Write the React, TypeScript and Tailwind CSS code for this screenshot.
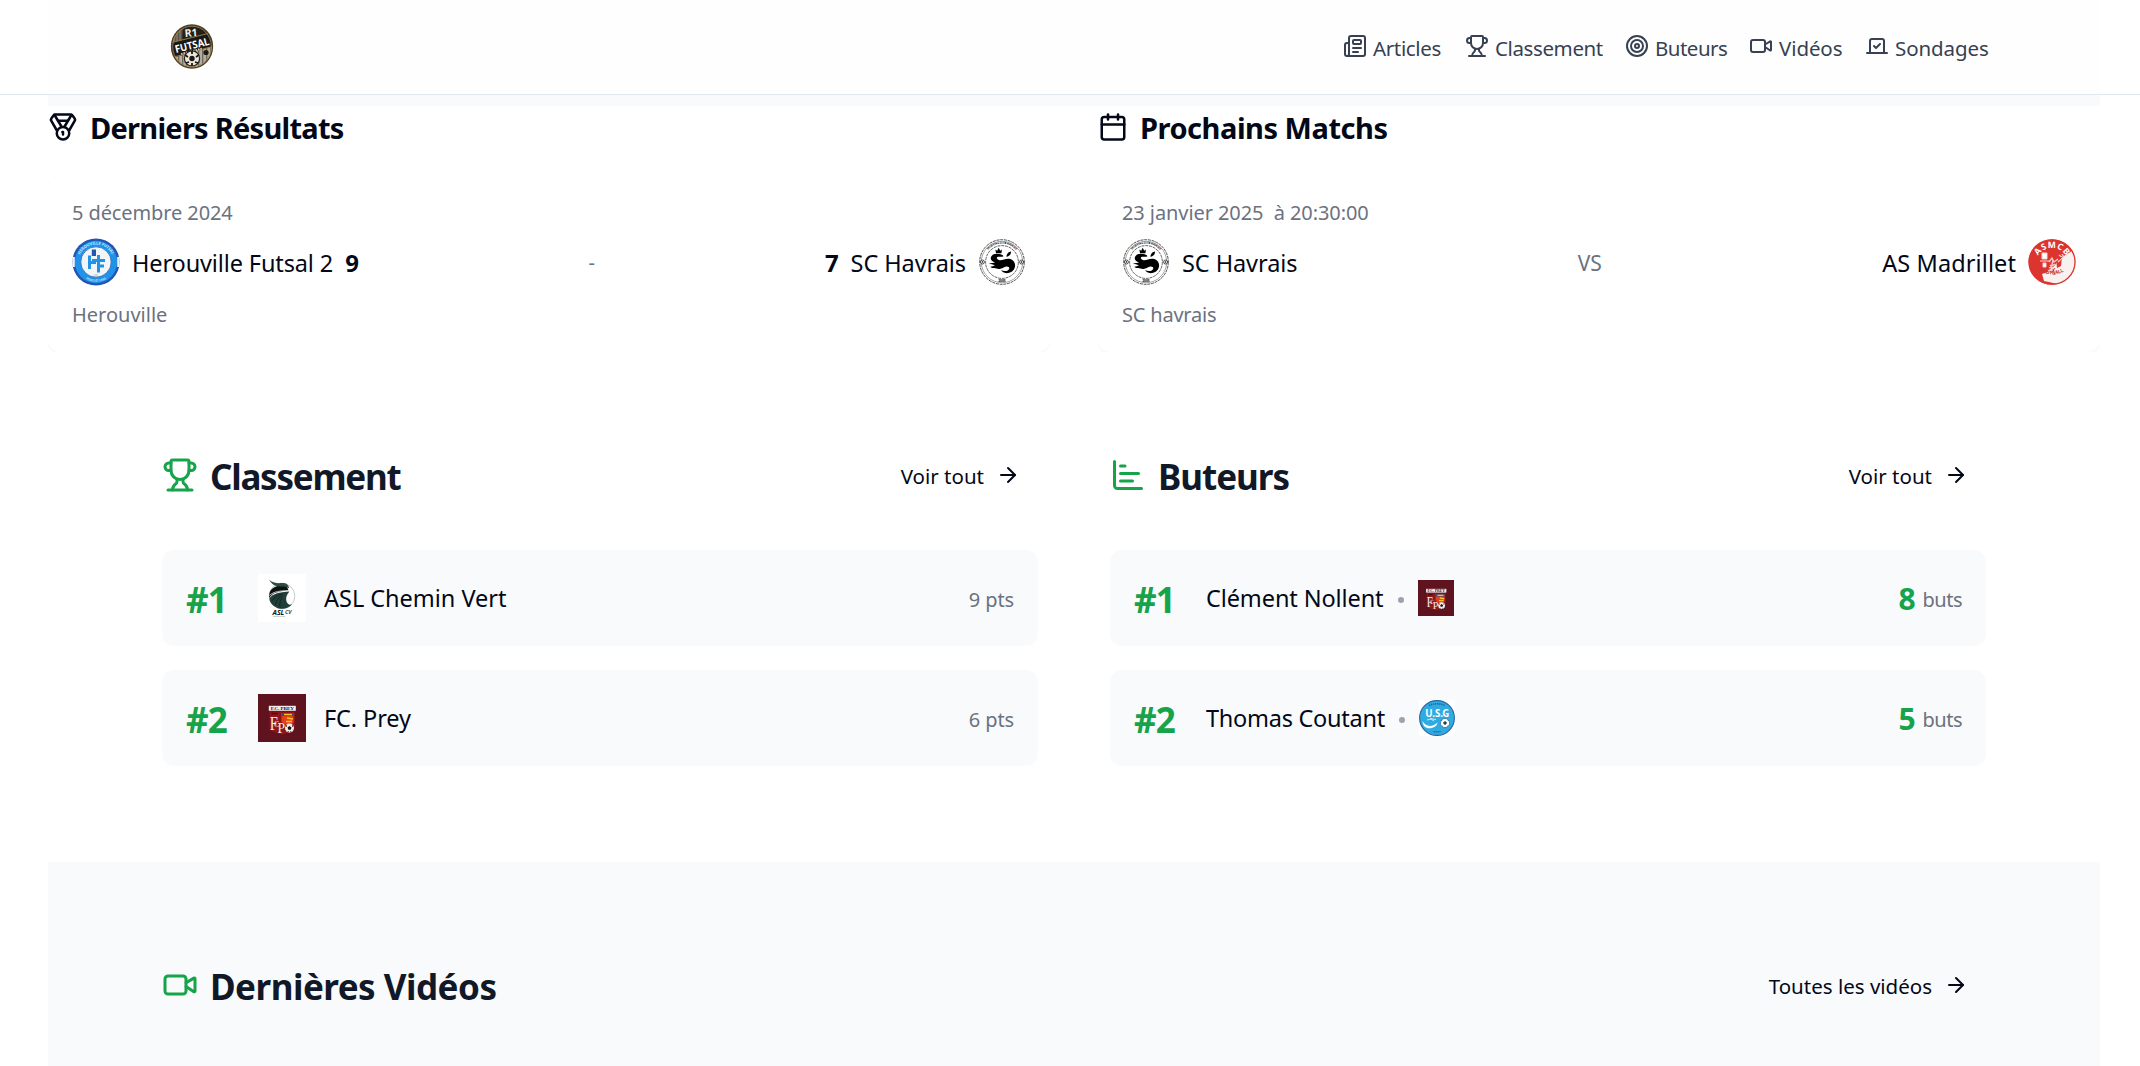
import type { ReactNode } from "react";
import {
  ArrowRight,
  Calendar,
  ChartBar,
  Medal,
  Newspaper,
  Target,
  Trophy,
  Video,
  Vote,
} from "lucide-react";

function LeagueLogo() {
  return (
    <svg viewBox="0 0 44 46" className="h-[46px] w-11">
      <defs>
        <clipPath id="league">
          <ellipse cx="22" cy="22.5" rx="20.5" ry="21.5" />
        </clipPath>
      </defs>
      <g clipPath="url(#league)">
        <rect width="44" height="46" fill="#b3aca0" />
        {[4, 8, 12, 16, 20, 24, 28, 32, 36, 40].map((x) => (
          <rect key={x} x={x} width="1.3" height="46" fill="#6f675a" />
        ))}
        <path d="M0 0H14L12 19 0 22Z" fill="#5b5449" />
        <path d="M4 0V20M7 0V20M10 0V20" stroke="#a1967f" strokeWidth=".8" />
        <path d="M13 0H44V10L12 18Z" fill="#23201c" />
        <path d="M0 19 44 8V22L6 33H0Z" fill="#1b1917" />
        <path d="M0 19 44 8M4 33 44 22" stroke="#9a7b43" strokeWidth="1" />
      </g>
      <text x="21" y="12.500" textAnchor="middle" fontFamily="Noto Sans" fontSize="10.500" fontWeight="700" fill="#f3efe6" transform="rotate(-5 21 9)">R1</text>
      <text x="22" y="25" textAnchor="middle" fontFamily="Noto Sans" fontSize="10.500" fontWeight="700" fill="#fff" textLength="35" lengthAdjust="spacingAndGlyphs" transform="rotate(-14 22 21)">FUTSAL</text>
      <path d="M11 30 32 24.5" stroke="#cfc8bb" strokeWidth="1.8" strokeDasharray="1.6 .9" />
      <circle cx="22" cy="34.5" r="7.6" fill="#ece7dc" stroke="#25221e" strokeWidth="1.2" />
      <circle cx="22" cy="34.5" r="2.7" fill="#1b1917" />
      <path d="M15 31l3 2M29 31l-3 2M16 39l3-1M28 39l-3-1M22 27v3M22 42v-3" stroke="#1b1917" strokeWidth="1.8" />
      <circle cx="36" cy="28.5" r="2.6" fill="#1b1917" />
      <ellipse cx="22" cy="22.5" rx="20.5" ry="21.5" fill="none" stroke="#4d4026" strokeWidth="1.3" />
      <ellipse cx="22" cy="22.5" rx="19.3" ry="20.3" fill="none" stroke="#a88b55" strokeWidth=".8" />
    </svg>
  );
}

function HerouvilleLogo() {
  return (
    <svg viewBox="0 0 48 48" className="size-12">
      <defs>
        <path id="hero-top" d="M6.5 24A17.5 17.5 0 0 1 41.5 24" />
        <path id="hero-bottom" d="M4.2 24A19.8 19.8 0 0 0 43.8 24" />
      </defs>
      <circle cx="24" cy="24" r="23.6" fill="#2256b0" />
      <circle cx="24" cy="24" r="21.2" fill="#1f93ea" />
      <path d="M.4 19h2.4v10H.4zM45.2 19h2.4v10h-2.4z" fill="#eaf4fc" />
      <circle cx="24" cy="24" r="15.2" fill="#f2f5f8" stroke="#2a63b8" strokeWidth=".8" />
      <g fontFamily="Noto Sans" fontWeight="700" fill="#c9e6fb">
        <text fontSize="4"><textPath href="#hero-top" startOffset="50%" textAnchor="middle">HEROUVILLE FUTSAL</textPath></text>
        <text fontSize="3"><textPath href="#hero-bottom" startOffset="50%" textAnchor="middle">FORTS ET UNIS</textPath></text>
      </g>
      <path d="M17.5 17.5V31M26.5 17v17.5M17.5 24.5H24M20 22.5h6.5M26.5 22.5h6.5M26.5 28h5.5" fill="none" stroke="#1f93ea" strokeWidth="3" />
      <rect x="19.8" y="11.5" width="4.2" height="6.5" fill="#2256b0" />
      <path d="M22 37h4" stroke="#9aa6b5" strokeWidth=".7" />
    </svg>
  );
}

function HavraisLogo() {
  return (
    <svg viewBox="0 0 48 48" className="size-12">
      <defs>
        <path id="hav-top" d="M5.6 24A18.4 18.4 0 0 1 42.4 24" />
      </defs>
      <g fill="none" stroke="#222">
        <circle cx="24" cy="24" r="22.3" strokeWidth=".8" strokeDasharray="3 .8" />
        <circle cx="24" cy="24" r="20.7" strokeWidth=".4" />
        <circle cx="24" cy="24" r="16.4" strokeWidth=".7" strokeDasharray="3 .8" />
        <circle cx="4.4" cy="24" r="2" fill="#fff" strokeWidth=".8" />
        <circle cx="43.6" cy="24" r="2" fill="#fff" strokeWidth=".8" />
      </g>
      <circle cx="4.4" cy="24" r=".8" />
      <circle cx="43.6" cy="24" r=".8" />
      <text fontSize="2.600" fontFamily="Noto Sans" fontWeight="700"><textPath href="#hav-top" startOffset="50%" textAnchor="middle">SPORTING CLUB HAVRAIS</textPath></text>
      <text x="24" y="44.2" fontSize="3.4" fontFamily="Noto Sans" fontWeight="700" textAnchor="middle">2005</text>
      <path d="M19.300 15.200 18.700 11.600 20.500 12.800 22 9.800 23.500 12.800 25.300 11.600 24.700 15.200Z" transform="translate(-1.300 0)" />
      <path d="M12.8 20.8C12.4 17.6 15.6 15.6 19.5 15.9 22.8 15.9 24.6 16.6 25.4 18.2 23.8 19.3 21.6 18.3 20 18.8 18 19.6 18.7 21.3 20.8 22 24 23 27 20.3 31 20.8 35.4 21.4 37.8 25 36.9 29 36 33.4 31.8 35.3 28.6 35.2 25.9 35 24 33.7 23.2 32 25.8 33.7 29.6 33.3 31 31.2 31.8 29.6 30.6 28.3 28.6 28.5 25.5 28.9 24.7 30.8 21.2 30.9 18.6 31 17.7 29.6 15.6 30 14.2 30.2 13.2 29.2 12.3 28.9 14 28 15.4 28.2 17 27.2 15 26.5 13 26.2 10.6 25.6 13.4 24.9 15.6 25 17 24.4 14.8 23.9 13.1 22.8 12.8 20.8Z" />
      <path d="M28.4 18.8C28.6 16 30 14 33 13.4 33.1 16.3 31.4 18.4 28.4 18.8Z" />
    </svg>
  );
}

function MadrilletLogo() {
  return (
    <svg viewBox="0 0 48 48" className="size-12">
      <defs>
        <clipPath id="asm">
          <ellipse cx="24" cy="24" rx="23.5" ry="22.7" />
        </clipPath>
        <path id="asm-top" d="M8 23A16.2 15.5 0 0 1 40 23" />
        <path id="asm-bottom" d="M8.6 31A19.5 14 0 0 0 39.4 31" />
      </defs>
      <g clipPath="url(#asm)">
        <rect width="48" height="48" fill="#dc352f" />
        <path d="M31 21 44 13 48 20V40L30 46 16 43 14 36 20 34 27 27Z" fill="#f7f1f0" />
        <path d="M28 21l6-2-1 9-4 2Z" fill="#dc352f" />
      </g>
      <ellipse cx="24" cy="24" rx="23" ry="22.2" fill="none" stroke="#dc352f" strokeWidth="1.2" />
      <text fontSize="8.6" fontFamily="Noto Sans" fontWeight="700" fill="#fff"><textPath href="#asm-top" startOffset="50%" textAnchor="middle" textLength="33">ASMCB</textPath></text>
      <text fontSize="5" fontFamily="Noto Sans" fontWeight="700" fill="#c73832"><textPath href="#asm-bottom" startOffset="48%" textAnchor="middle">FOOTBALL</textPath></text>
      <path d="M14 15h5v6h-5zM15 25h3v4h-3zM12 23h9" fill="#fff" stroke="#f8d4d2" strokeWidth="1" />
      <path d="M21 24l3-4 2 4 4-3M22 27l5 6M27 26l-6 4M20 33l5-3 2 6M30 24l6-6M25 22l-2 9M31 17l4 3M34 16l2 3" fill="none" stroke="#f6cfcd" strokeWidth="1.3" />
      <path d="M23 35l4-5M27 37l-2-6M34 19l-3 3" stroke="#c73832" strokeWidth=".9" />
    </svg>
  );
}

function CheminVertLogo() {
  return (
    <svg viewBox="0 0 48 48" className="size-12">
      <rect width="48" height="48" fill="#fff" />
      <circle cx="24" cy="22" r="12.8" fill="#fff" stroke="#8d9a97" strokeWidth=".5" />
      <path d="M11.2 24C10.6 17 14 13.5 19 12.2 26 10 29 11 30.5 16.5 24 17 18 18 15 20 13 21.5 12 22.6 11.2 24Z" fill="#0c1210" />
      <path d="M11.2 5.8C14 8.6 19 9.6 24 9 28 8.6 30.6 10.4 31.2 14.5 29 13 26 12.4 22 12.6 17 12.4 13.4 10 11.2 5.8Z" fill="#2b4a43" />
      <path d="M11.400 24.400C14 20 21 17.800 31.400 17.400 28.500 20.500 27.500 24 28.500 27.500 29.500 30.500 32 31.500 34 30 31.500 34.500 23 36.500 18 33.300 13.600 30.800 11.500 27.800 11.400 24.400Z" fill="#203f38" />
      <path d="M14 27C16 23 20 21 25 20M17.5 31C18 26 21 23 24.5 21.8M22 33.5C21 29 22.4 25.6 24.6 23.4" fill="none" stroke="#0f2420" strokeWidth=".9" />
      <path d="M11.4 21.4C16 17.4 22 16.8 30.8 16.6" fill="none" stroke="#fff" strokeWidth=".7" />
      <text x="14.6" y="41.4" fontSize="6.6" fontFamily="Noto Sans" fontStyle="italic" fontWeight="700" fill="#0c1a17" textLength="11.5" lengthAdjust="spacingAndGlyphs">ASL</text>
      <text x="27" y="40.2" fontSize="5.4" fontFamily="Noto Sans" fontStyle="italic" fontWeight="700" fill="#3d5751" textLength="6.5" lengthAdjust="spacingAndGlyphs">CV</text>
      <path d="M15 42.4h12" stroke="#8d9a97" strokeWidth=".5" />
    </svg>
  );
}

function PreyLogo({ className }: { className: string }) {
  return (
    <svg viewBox="0 0 48 48" className={className}>
      <rect width="48" height="48" fill="#5e131e" />
      <path d="M11.5 17.5H37V33C36 37.5 30 39 24.2 40.5 18 39 12.5 37.5 11.5 33Z" fill="#8e1519" />
      <rect x="10.8" y="11.8" width="27" height="5" fill="#f6eeee" />
      <text x="24.3" y="16.2" textAnchor="middle" fontSize="5" fontFamily="Liberation Serif" fontWeight="700" fill="#2a1013" textLength="23" lengthAdjust="spacingAndGlyphs">F.C. PREY</text>
      <path d="M23.5 19h12v10l-6 2.500-6-3.500Z" fill="#e2401d" />
      <path d="M24 19h11.500v3H24z" fill="#2b4d8c" />
      <path d="M26 20.500h8M29 24l6 1M28 27.500h6" stroke="#f5c21b" strokeWidth="1.700" />
      <text x="11.800" y="36" fontSize="19" fontFamily="Liberation Serif" fill="#f6eeee" textLength="8" lengthAdjust="spacingAndGlyphs">F</text>
      <text x="16" y="32.500" fontSize="9" fontFamily="Liberation Serif" fill="#f6eeee" textLength="5" lengthAdjust="spacingAndGlyphs">C</text>
      <text x="19.500" y="38.500" fontSize="14" fontFamily="Liberation Serif" fill="#f6eeee" textLength="7.500" lengthAdjust="spacingAndGlyphs">P</text>
      <circle cx="31.500" cy="34" r="4.500" fill="#f6eeee" />
      <path d="M31.500 32l2 1.500-.8 2.300h-2.400l-.8-2.300ZM27.500 32l1.500-1v2ZM35.500 32l-1.500-1v2ZM29 37.500l1.500-.5.500 1ZM34 37.500l-1.500-.5-.5 1Z" fill="#1c1113" />
      <path d="M13.500 19.500h6" stroke="#4a0a10" strokeWidth="1.500" />
    </svg>
  );
}

function UsgLogo({ className }: { className: string }) {
  return (
    <svg viewBox="0 0 36 36" className={className}>
      <rect width="36" height="36" fill="#fff" />
      <circle cx="18" cy="18" r="17.4" fill="#2fabe1" stroke="#2a65a0" strokeWidth="1.1" />
      <path d="M10 5.5C15 3.200 21 3.200 26 5.500" fill="none" stroke="#226a9c" strokeWidth="1.600" strokeDasharray="1.300 .8" />
      <text x="18.300" y="16.600" textAnchor="middle" fontFamily="Noto Sans" fontSize="10.500" fontWeight="700" fill="#fff" textLength="24" lengthAdjust="spacingAndGlyphs">U.S.G</text>
      <path d="M3.500 21C7 27.500 14 27 18.500 22.500 18 28 9 30 5.500 26.500 4 24.800 3.500 23 3.500 21Z" fill="#fff" />
      <path d="M8 20l4-1 3 2M11 18.500l6 1" stroke="#d7f1fc" strokeWidth=".9" fill="none" />
      <circle cx="26" cy="23" r="4.600" fill="#fff" stroke="#286c99" strokeWidth=".7" />
      <path d="M26 21.500l1.500 1-.6 1.700h-1.800l-.6-1.700ZM22.300 20.800l1.200-.8M29.700 20.800l-1.200-.8M23.300 26l.8.600M28.700 26l-.8.600" fill="#1d3f58" stroke="#1d3f58" strokeWidth=".7" />
      <path d="M14.500 31.800h7" stroke="#226a9c" strokeWidth="1.500" strokeDasharray="1.300 .7" />
    </svg>
  );
}

const nav = [
  { Icon: Newspaper, label: "Articles", box: "w-[68px] tracking-[-0.36px]" },
  { Icon: Trophy, label: "Classement", box: "w-[106px] tracking-[-0.39px]" },
  { Icon: Target, label: "Buteurs", box: "w-[70px] tracking-[-0.52px]" },
  { Icon: Video, label: "Vidéos", box: "w-[62px] tracking-[-0.1px]" },
  { Icon: Vote, label: "Sondages", box: "w-[91px] tracking-[-0.1px]" },
];

function Header() {
  return (
    <header className="h-[95px] border-b border-[#e2e8f0] bg-white pr-10 pl-12">
      <div className="flex h-[94px] items-center justify-between bg-[#fefefe] pr-[114px] pl-[122px]">
        <LeagueLogo />
        <nav className="flex gap-6 text-[20.5px] leading-[30px] text-[#374151]">
          {nav.map(({ Icon, label, box }) => (
            <a key={label} className="flex items-center gap-1.5">
              <Icon className="-mt-0.5 size-6" />
              <span className={`mt-0.5 whitespace-nowrap ${box}`}>{label}</span>
            </a>
          ))}
        </nav>
      </div>
    </header>
  );
}

function MatchColumn({ icon, title, titleClass, date, place, children }: {
  icon: ReactNode;
  title: string;
  titleClass: string;
  date: ReactNode;
  place: ReactNode;
  children: ReactNode;
}) {
  return (
    <section className="flex-1">
      <h2 className="flex h-[30px] items-center gap-3 text-[29px] leading-[30px] font-bold text-[#020817]">
        {icon}
        <span className={`mt-0.5 ${titleClass}`}>{title}</span>
      </h2>
      <div className="mt-[34px] overflow-hidden">
        <div className="h-44 rounded-xl bg-white px-6 pt-[22px] text-[20px] leading-[30px] text-[#6b7280] shadow-[0_1px_3px_rgba(0,0,0,0.05)]">
          <p>{date}</p>
          <div className="mt-2.5 flex h-12 items-center justify-between">{children}</div>
          <p className="mt-3.5">{place}</p>
        </div>
      </div>
    </section>
  );
}

function Team({ children }: { children: ReactNode }) {
  return (
    <div className="flex items-center gap-3 text-[23.5px] tracking-[-0.07px] whitespace-nowrap text-[#020817]">
      {children}
    </div>
  );
}

function SectionHead({ icon, title, titleClass, link }: {
  icon: ReactNode;
  title: string;
  titleClass: string;
  link: string;
}) {
  return (
    <div className="flex h-9 items-center justify-between">
      <h2 className="flex items-center gap-3 text-[35px] leading-9 font-bold text-[#111827]">
        {icon}
        <span className={`mt-[3px] ${titleClass}`}>{title}</span>
      </h2>
      <a className="mr-[18px] flex items-center gap-3 text-[20.5px] leading-[30px] text-[#020817]">
        <span className="mt-0.5">{link}</span>
        <ArrowRight className="size-6" />
      </a>
    </div>
  );
}

function Row({ rank, children }: { rank: string; children: ReactNode }) {
  return (
    <div className="flex h-24 items-center rounded-xl bg-[#f9fafb] px-6 text-[23.5px] tracking-[-0.1px] whitespace-nowrap text-[#020817]">
      <span className="mt-[3px] mr-6 w-12 text-[35px] leading-9 font-bold tracking-[-0.8px] text-[#16a34a]">
        {rank}
      </span>
      {children}
    </div>
  );
}

function Dot() {
  return <span className="mt-1 mr-3.5 ml-3 size-1.5 rounded-full bg-[#9ca3af]" />;
}

function Points({ children }: { children: ReactNode }) {
  return <span className="mt-[3px] ml-auto text-[20px] text-[#6b7280]">{children}</span>;
}

function Goals({ count }: { count: number }) {
  return (
    <span className="mt-0.5 ml-auto flex items-center gap-[7px]">
      <span className="text-[30px] leading-[30px] font-bold text-[#16a34a]">{count}</span>
      <span className="mt-0.5 text-[20px] leading-[30px] tracking-[-0.5px] text-[#6b7280]">buts</span>
    </span>
  );
}

export default function App() {
  return (
    <div className="h-[1066px] overflow-hidden bg-white font-['Noto_Sans',sans-serif]">
      <Header />
      <main className="mx-12 w-[2052px]">
        <div className="h-[11px] bg-[#f8fafc]" />
        <div className="flex h-[246px] gap-12 pt-1.5">
          <MatchColumn
            icon={<Medal className="size-[30px]" />}
            title="Derniers Résultats"
            titleClass="tracking-[-0.74px]"
            date={<span className="tracking-[-0.1px]">5 décembre 2024</span>}
            place="Herouville"
          >
            <Team>
              <HerouvilleLogo />
              <span className="mt-0.5 tracking-[-0.12px]">Herouville Futsal 2</span>
              <span className="mt-0.5 text-2xl font-bold">9</span>
            </Team>
            <span className="mt-0.5">-</span>
            <Team>
              <span className="mt-0.5 text-2xl font-bold">7</span>
              <span className="mt-0.5">SC Havrais</span>
              <HavraisLogo />
            </Team>
          </MatchColumn>
          <MatchColumn
            icon={<Calendar className="size-[30px]" />}
            title="Prochains Matchs"
            titleClass="tracking-[-0.47px]"
            date={<span className="tracking-[-0.08px] whitespace-pre">{"23 janvier 2025  à 20:30:00"}</span>}
            place={<span className="tracking-[-0.2px]">SC havrais</span>}
          >
            <Team>
              <HavraisLogo />
              <span className="mt-0.5">SC Havrais</span>
            </Team>
            <span className="mt-0.5 text-[21px]">VS</span>
            <Team>
              <span className="mt-0.5 tracking-[0.1px]">AS Madrillet</span>
              <MadrilletLogo />
            </Team>
          </MatchColumn>
        </div>

        <div className="flex h-[510px] gap-[72px] px-[114px] pt-[105px]">
          <section className="flex-1">
            <SectionHead
              icon={<Trophy className="size-9 text-[#16a34a]" />}
              title="Classement"
              titleClass="tracking-[-1.25px]"
              link="Voir tout"
            />
            <div className="mt-[57px] flex flex-col gap-6">
              <Row rank="#1">
                <CheminVertLogo />
                <span className="mt-0.5 ml-[18px] tracking-[-0.02px]">ASL Chemin Vert</span>
                <Points>9 pts</Points>
              </Row>
              <Row rank="#2">
                <PreyLogo className="size-12" />
                <span className="mt-0.5 ml-[18px]">FC. Prey</span>
                <Points>6 pts</Points>
              </Row>
            </div>
          </section>
          <section className="flex-1">
            <SectionHead
              icon={<ChartBar className="size-9 text-[#16a34a]" />}
              title="Buteurs"
              titleClass="tracking-[-1px]"
              link="Voir tout"
            />
            <div className="mt-[57px] flex flex-col gap-6">
              <Row rank="#1">
                <span className="mt-0.5 w-[180px]">Clément Nollent</span>
                <Dot />
                <PreyLogo className="size-9" />
                <Goals count={8} />
              </Row>
              <Row rank="#2">
                <span className="mt-0.5 w-[181px] tracking-[-0.26px]">Thomas Coutant</span>
                <Dot />
                <UsgLogo className="size-9" />
                <Goals count={5} />
              </Row>
            </div>
          </section>
        </div>

        <section className="h-[204px] bg-[#f9fafb] px-[114px] pt-[105px]">
          <SectionHead
            icon={<Video className="size-9 text-[#16a34a]" />}
            title="Dernières Vidéos"
            titleClass="tracking-[-0.5px]"
            link="Toutes les vidéos"
          />
        </section>
      </main>
    </div>
  );
}
